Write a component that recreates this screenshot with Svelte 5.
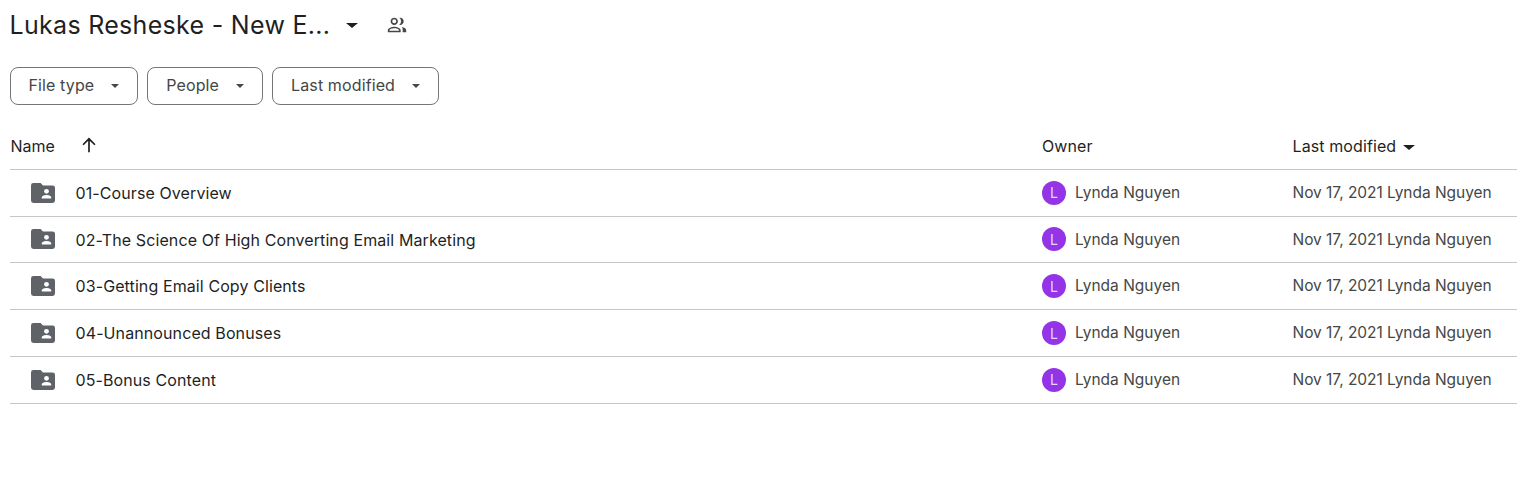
<script>
  const folders = [
    '01-Course Overview',
    '02-The Science Of High Converting Email Marketing',
    '03-Getting Email Copy Clients',
    '04-Unannounced Bonuses',
    '05-Bonus Content'
  ];
  const filters = ['File type', 'People', 'Last modified'];
</script>

<div class="page">
  <header class="title-row">
    <h1>Lukas Resheske - New E...</h1>
    <span class="caret big"></span>
    <svg class="people" viewBox="0 0 24 24" width="22" height="22" aria-hidden="true">
      <path fill="#444746" d="M9 12c-2.200 0-4-1.800-4-4s1.800-4 4-4 4 1.800 4 4-1.800 4-4 4zm0-6.200a2.200 2.200 0 1 0 0 4.400 2.200 2.200 0 0 0 0-4.400zM2 20v-2.500c0-2.300 4.600-3.700 7-3.700s7 1.400 7 3.700V20H2zm1.800-1.800h10.400v-.7c0-.8-3.200-1.900-5.200-1.900s-5.200 1.100-5.200 1.900v.7zM14.500 11.800c1.300-.9 1.900-2.300 1.900-3.800s-.6-2.900-1.900-3.800c.2-.1.500-.2.900-.2 2.200 0 3.900 1.800 3.900 4s-1.700 4-3.900 4c-.4 0-.7-.1-.9-.2zM17.500 14.200c2.200.5 4.500 1.600 4.500 3.300V20h-3.800v-2.500c0-1.300-.2-2.400-.7-3.300z"/>
    </svg>
  </header>

  <div class="filters">
    {#each filters as label}
      <button type="button" class="chip">
        <span class="chip-label">{label}</span>
        <span class="caret"></span>
      </button>
    {/each}
  </div>

  <div class="table">
    <div class="row head">
      <div class="name-head">
        <span class="name-label">Name</span>
        <svg viewBox="0 0 16 16" width="18" height="18" aria-hidden="true">
          <path fill="none" stroke="#1f1f1f" stroke-width="1.500" d="M8 14.500V2.500M2.700 7.800 8 2.500l5.300 5.300"/>
        </svg>
      </div>
      <div class="head-text">Owner</div>
      <div class="head-text">Last modified <span class="caret dark"></span></div>
    </div>

    {#each folders as folder}
      <div class="row">
        <div class="name-cell">
          <svg viewBox="0 0 24 20" width="24" height="20" aria-hidden="true">
            <path fill="#5f6368" d="M2.400 0h7.200l2.400 2.400h9.600A2.400 2.400 0 0 1 24 4.800v12.800a2.400 2.400 0 0 1-2.400 2.400H2.400A2.400 2.400 0 0 1 0 17.600V2.400A2.400 2.400 0 0 1 2.400 0z"/>
            <circle cx="15.500" cy="8.300" r="2.400" fill="#fff"/>
            <path fill="#fff" d="M10.800 15.400v-1c0-1.600 3.100-2.400 4.700-2.400s4.700.8 4.700 2.400v1z"/>
          </svg>
          <span class="folder-name">{folder}</span>
        </div>
        <div class="owner">
          <span class="avatar">L</span>
          <span class="cell-text">Lynda Nguyen</span>
        </div>
        <div class="modified cell-text">Nov 17, 2021 Lynda Nguyen</div>
      </div>
    {/each}
  </div>
</div>

<style>
  :global(body) {
    background: #fff;
  }

  .page {
    font-family: Inter, Roboto, sans-serif;
    color: #1f1f1f;
    height: 482px;
    overflow: hidden;
    padding-left: 10px;
    box-sizing: border-box;
  }

  .title-row {
    display: flex;
    align-items: center;
    height: 50px;
  }

  h1 {
    margin: 0 0 0 -0.500px;
    font-size: 25px;
    font-weight: 400;
    letter-spacing: 0.300px;
    width: 336.500px;
    white-space: nowrap;
  }

  .caret {
    display: inline-block;
    width: 0;
    height: 0;
    border-left: 4px solid transparent;
    border-right: 4px solid transparent;
    border-top: 4px solid #444746;
  }

  .caret.big {
    border-left-width: 6px;
    border-right-width: 6px;
    border-top-width: 5px;
    border-top-color: #1f1f1f;
  }

  .caret.dark {
    border-left-width: 6px;
    border-right-width: 6px;
    border-top-width: 5px;
    border-top-color: #1f1f1f;
    vertical-align: 2px;
    margin-left: 2px;
  }

  .people {
    margin-left: 28px;
  }

  .filters {
    display: flex;
    gap: 9px;
    margin-top: 17px;
    margin-left: -0.500px;
  }

  .chip {
    display: flex;
    align-items: center;
    justify-content: space-between;
    height: 38px;
    padding: 0 18px;
    gap: 17px;
    background: #fff;
    border: 1px solid #747775;
    border-radius: 8px;
    font: inherit;
    font-size: 16px;
    letter-spacing: 0.120px;
    color: #444746;
  }

  .chip-label {
    padding-bottom: 2px;
  }

  .table {
    margin-top: 17px;
  }

  .row {
    display: grid;
    grid-template-columns: 1032px 250.500px 1fr;
    align-items: center;
    height: 46.800px;
    box-sizing: border-box;
    border-bottom: 1px solid #c7c7c7;
    font-size: 15.500px;
  }

  .row.head {
    height: 47.800px;
    font-size: 16px;
  }

  .head-text {
    padding-top: 1px;
    letter-spacing: 0.100px;
  }

  .name-head {
    display: flex;
    align-items: center;
  }

  .name-label {
    width: 70px;
    padding: 1px 0 0 0.500px;
    box-sizing: border-box;
  }

  .name-cell {
    display: flex;
    align-items: center;
    padding-left: 21px;
  }

  .folder-name {
    margin-left: 20.500px;
    padding-top: 0.200px;
    font-size: 16px;
    letter-spacing: 0.100px;
  }

  .cell-text {
    padding-bottom: 0.800px;
  }

  .owner {
    display: flex;
    align-items: center;
    gap: 9px;
    color: #444746;
  }

  .avatar {
    display: flex;
    align-items: center;
    justify-content: center;
    width: 24px;
    height: 24px;
    border-radius: 50%;
    background: #9334e6;
    color: #e8d5fa;
    font-size: 14px;
  }

  .modified {
    color: #444746;
    letter-spacing: -0.040px;
    white-space: nowrap;
  }
</style>
